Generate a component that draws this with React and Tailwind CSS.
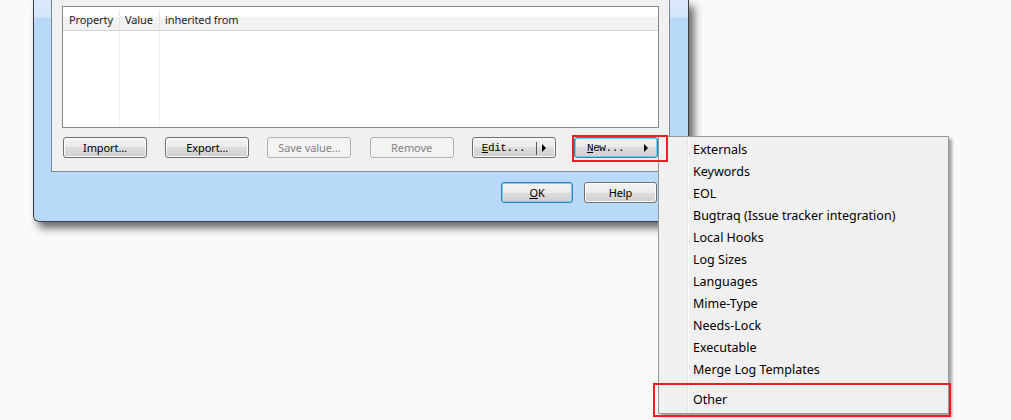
import React from "react"

const menuItems = [
  "Externals",
  "Keywords",
  "EOL",
  "Bugtraq (Issue tracker integration)",
  "Local Hooks",
  "Log Sizes",
  "Languages",
  "Mime-Type",
  "Needs-Lock",
  "Executable",
  "Merge Log Templates",
]

function Arrow() {
  return <span className="h-0 w-0 border-y-[4px] border-l-[4px] border-y-transparent border-l-black" />
}

function Button({ children, disabled, focused, className = "" }) {
  let look =
    "border-[#707070] text-black bg-[linear-gradient(to_bottom,#f2f2f2_0%,#ebebeb_50%,#dddddd_50%,#cfcfcf_100%)] shadow-[inset_0_0_0_1px_#fcfcfc]"
  if (disabled) look = "border-[#adb2b5] text-[#838383] bg-[#f4f4f4]"
  if (focused)
    look =
      "border-[#3c7fb1] text-black bg-[linear-gradient(to_bottom,#f2f2f2_0%,#ebebeb_50%,#dddddd_50%,#cfcfcf_100%)] shadow-[inset_0_0_0_1px_#6fd0f6]"
  return (
    <div
      className={`flex h-[21px] items-center whitespace-nowrap rounded-[3px] border pt-px text-[11px] tracking-[-0.1px] ${look} ${className}`}
    >
      {children}
    </div>
  )
}

const mono = { fontFamily: '"Liberation Mono", "DejaVu Sans Mono", monospace' }

export default function App() {
  return (
    <div
      className="relative h-[420px] w-[1011px] overflow-hidden bg-[#fafafa]"
      style={{ fontFamily: '"Noto Sans", "Liberation Sans", sans-serif' }}
    >
      {/* dialog window */}
      <div className="ml-[33px] flex h-[222px] w-[656px] flex-col rounded-b-[6px] border-x border-b border-[#3a4047] bg-[linear-gradient(to_bottom,#dceafb_0px,#d5e6fa_17px,#b9d9f8_18px,#b9d9f8_100%)] shadow-[5px_6px_9px_rgba(0,0,0,0.6)]">
        <div className="flex h-[172px] pl-[17px] pr-[18px]">
          <div className="flex flex-1 flex-col border-x border-b border-[#7b8896] bg-[#f0f0f0] px-[10px] pt-[6px]">
            {/* property list */}
            <div className="flex h-[122px] flex-col border border-[#828790] bg-white">
              <div className="flex h-[24px] items-center border-b border-[#d5d5d5] bg-[linear-gradient(to_bottom,#ffffff_0%,#ffffff_42%,#f3f4f6_42%,#eff0f2_100%)] pt-[3px] text-[11px] tracking-[-0.1px] text-[#1e1e1e]">
                <div className="flex h-full w-[57px] items-center border-r border-[#e3e4e6] pl-[6px]">Property</div>
                <div className="flex h-full w-[40px] items-center border-r border-[#e3e4e6] pl-[5px]">Value</div>
                <div className="flex h-full flex-1 items-center pl-[5px]">inherited from</div>
              </div>
              <div className="flex flex-1">
                <div className="w-[57px] border-r border-[#edf2f9]" />
                <div className="w-[40px] border-r border-[#edf2f9]" />
                <div className="flex-1" />
              </div>
            </div>

            {/* buttons */}
            <div className="mt-[9px] flex justify-between pl-px pr-px">
              <Button className="w-[84px] justify-center">Import...</Button>
              <Button className="w-[84px] justify-center">Export...</Button>
              <Button disabled className="w-[84px] justify-center">Save value...</Button>
              <Button disabled className="w-[84px] justify-center">Remove</Button>
              <Button className="w-[84px]">
                <span className="ml-[9px] w-[54px] text-[11px] tracking-[-0.4px]" style={mono}>
                  <span className="underline">E</span>dit...
                </span>
                <span className="h-[13px] border-l border-[#5c5c5c]" />
                <span className="ml-[5px] flex">
                  <Arrow />
                </span>
              </Button>
              <Button focused className="w-[84px]">
                <span className="ml-[12px] w-[57px] text-[11px] tracking-[-0.4px]" style={mono}>
                  <span className="underline">N</span>ew...
                </span>
                <span className="flex">
                  <Arrow />
                </span>
              </Button>
            </div>
          </div>
        </div>

        <div className="flex justify-end gap-[11px] pr-[31px] pt-[10px]">
          <Button focused className="w-[72px] justify-center">
            <span className="underline">O</span>K
          </Button>
          <Button className="w-[73px] justify-center">Help</Button>
        </div>
      </div>

      {/* context menu */}
      <div className="absolute left-[658px] top-[136px] flex h-[278px] w-[291px] flex-col border border-[#979797] bg-[#f0f0f0] py-[2px] text-[12.5px] text-black shadow-[3px_3px_3px_rgba(0,0,0,0.35)]">
        <div className="absolute bottom-[2px] left-[28px] top-[2px] w-[2px] border-l border-r border-l-[#e2e3e3] border-r-white" />
        {menuItems.map((item) => (
          <div key={item} className="flex h-[22px] items-center pl-[34px]">
            {item}
          </div>
        ))}
        <div className="flex h-[8px] items-center pl-[30px] pr-[2px]">
          <div className="h-[2px] flex-1 border-t border-b border-t-[#e0e0e0] border-b-white" />
        </div>
        <div className="flex h-[22px] items-center pl-[34px]">Other</div>
      </div>

      {/* annotation boxes */}
      <div className="absolute left-[572px] top-[135px] h-[27px] w-[96px] border-2 border-[#ee1d23]" />
      <div className="absolute left-[653px] top-[383px] h-[34px] w-[298px] border-2 border-[#ee1d23]" />
    </div>
  )
}
